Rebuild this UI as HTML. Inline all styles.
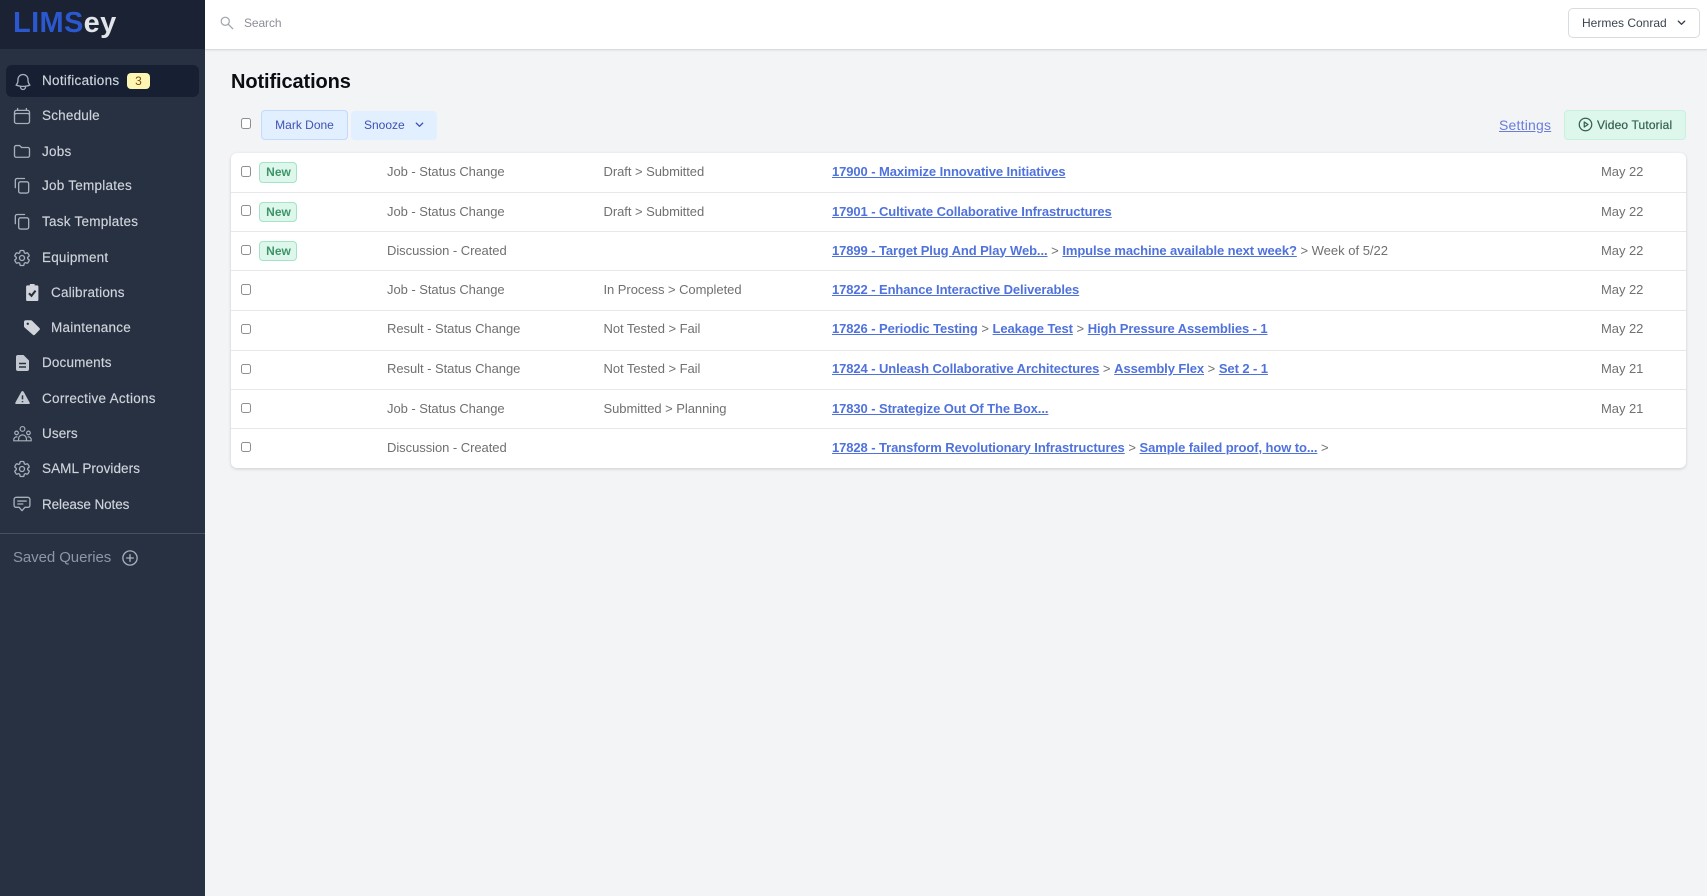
<!DOCTYPE html>
<html lang="en">
<head>
<meta charset="utf-8">
<title>Notifications</title>
<style>
html,body{margin:0;padding:0;width:1707px;height:896px;overflow:hidden;background:#f3f4f6;font-family:"Liberation Sans",Arial,sans-serif;}
*{box-sizing:border-box;}
.a{position:absolute;white-space:nowrap;}
#side{position:absolute;left:0;top:0;width:205px;height:896px;background:#283141;}
#logo{position:absolute;left:0;top:0;width:205px;height:49px;background:#1a2233;}
#active{position:absolute;left:6px;top:65px;width:193px;height:32px;background:#172033;border-radius:6px;}
.n{position:absolute;left:42px;height:20px;line-height:20px;font-size:13.5px;color:#cfd4dc;white-space:nowrap;-webkit-text-stroke:.15px #cfd4dc;letter-spacing:.25px;}
.n.s{left:51px;}
.i{position:absolute;left:12px;width:20px;height:20px;fill:none;stroke:#a7afbb;stroke-width:1.6;stroke-linecap:round;stroke-linejoin:round;}
.f{position:absolute;fill:#d1d5db;}
#top{position:absolute;left:205px;top:0;width:1502px;height:49.5px;background:#fff;border-bottom:1px solid #d9dbdf;box-shadow:0 1px 2px rgba(0,0,0,.06);}
#card{position:absolute;left:231px;top:153px;width:1455px;height:315px;background:#fff;border-radius:6px;box-shadow:0 1px 3px rgba(0,0,0,.16);}
.sep{position:absolute;left:231px;width:1455px;height:1px;background:#e5e7eb;}
.cb{position:absolute;left:240.5px;width:10.5px;height:10.5px;background:#fff;border:1px solid #8f8f8f;border-radius:2.5px;}
.badge{position:absolute;left:259px;width:38px;height:20.5px;background:#def7ec;border:1px solid #a5e3c5;border-radius:4px;color:#3f9468;font-size:12px;font-weight:bold;line-height:18.5px;text-align:center;padding-left:1px;}
.t{position:absolute;height:20px;line-height:20px;font-size:13px;color:#707070;white-space:nowrap;letter-spacing:-.05px;}
.l{position:absolute;left:832px;height:20px;line-height:20px;font-size:13px;color:#707070;white-space:nowrap;}
.l a{color:#4f72dc;font-weight:bold;text-decoration:underline;letter-spacing:-.09px;}
</style>
</head>
<body>
<div id="side">
  <div id="logo">
    <div class="a" style="left:13px;top:7px;line-height:32px;font-size:29px;font-weight:bold;letter-spacing:.35px;"><span style="color:#2b57cf">LIMS</span><span style="color:#e1e4e9">ey</span></div>
  </div>
  <div id="active"></div>

  <svg class="i" style="top:71.500px;left:12.500px" viewBox="0 0 24 24"><path d="M14.857 17.082a23.848 23.848 0 0 0 5.454-1.31A8.967 8.967 0 0 1 18 9.75V9A6 6 0 0 0 6 9v.75a8.967 8.967 0 0 1-2.312 6.022c1.733.64 3.56 1.085 5.455 1.31m5.714 0a24.255 24.255 0 0 1-5.714 0m5.714 0a3 3 0 1 1-5.714 0"/></svg>
  <div class="n" style="top:71px;letter-spacing:.3px">Notifications</div>
  <div class="a" style="left:127px;top:73px;width:23px;height:16px;background:#fdf6b2;border-radius:4px;color:#7a4a12;font-size:12px;line-height:16px;text-align:center;">3</div>

  <svg class="i" style="top:106px" viewBox="0 0 24 24"><path d="M6.75 3v2.25M17.25 3v2.25M3 18.75V7.5a2.25 2.25 0 0 1 2.25-2.25h13.5A2.25 2.25 0 0 1 21 7.5v11.25m-18 0A2.25 2.25 0 0 0 5.25 21h13.5A2.25 2.25 0 0 0 21 18.75m-18 0v-7.5A2.25 2.25 0 0 1 5.25 9h13.5A2.25 2.25 0 0 1 21 11.25v7.5"/></svg>
  <div class="n" style="top:106px;letter-spacing:.2px">Schedule</div>

  <svg class="i" style="top:141px" viewBox="0 0 24 24"><path d="M3 7.500a2 2 0 0 1 2-2h4.200l2.300 2.300H19a2 2 0 0 1 2 2v7.700a2 2 0 0 1-2 2H5a2 2 0 0 1-2-2z"/></svg>
  <div class="n" style="top:141.5px">Jobs</div>

  <svg class="i" style="top:176px" viewBox="0 0 24 24"><path d="M4 14V5.100C4 3.900 4.900 3 6.100 3H15"/><rect x="8" y="7" width="12" height="13.500" rx="2.200"/></svg>
  <div class="n" style="top:176px">Job Templates</div>

  <svg class="i" style="top:212px" viewBox="0 0 24 24"><path d="M4 14V5.100C4 3.900 4.900 3 6.100 3H15"/><rect x="8" y="7" width="12" height="13.500" rx="2.200"/></svg>
  <div class="n" style="top:212px">Task Templates</div>

  <svg class="i" style="top:248px" viewBox="0 0 24 24"><path d="M9.594 3.94c.09-.542.56-.94 1.11-.94h2.593c.55 0 1.02.398 1.11.94l.213 1.281c.063.374.313.686.645.87.074.04.147.083.22.127.325.196.72.257 1.075.124l1.217-.456a1.125 1.125 0 0 1 1.37.49l1.296 2.247a1.125 1.125 0 0 1-.26 1.431l-1.003.827c-.293.241-.438.613-.43.992a7.723 7.723 0 0 1 0 .255c-.008.378.137.75.43.991l1.004.827c.424.35.534.955.26 1.43l-1.298 2.247a1.125 1.125 0 0 1-1.369.491l-1.217-.456c-.355-.133-.75-.072-1.076.124a6.47 6.47 0 0 1-.22.128c-.331.183-.581.495-.644.869l-.213 1.281c-.09.543-.56.94-1.11.94h-2.594c-.55 0-1.019-.398-1.11-.94l-.213-1.281c-.062-.374-.312-.686-.644-.87a6.52 6.52 0 0 1-.22-.127c-.325-.196-.72-.257-1.076-.124l-1.217.456a1.125 1.125 0 0 1-1.369-.49l-1.297-2.247a1.125 1.125 0 0 1 .26-1.431l1.004-.827c.292-.24.437-.613.43-.991a6.932 6.932 0 0 1 0-.255c.007-.38-.138-.751-.43-.992l-1.004-.827a1.125 1.125 0 0 1-.26-1.43l1.297-2.247a1.125 1.125 0 0 1 1.37-.491l1.216.456c.356.133.751.072 1.076-.124.072-.044.146-.086.22-.128.332-.183.582-.495.644-.869l.214-1.28Z"/><path d="M15 12a3 3 0 1 1-6 0 3 3 0 0 1 6 0Z"/></svg>
  <div class="n" style="top:248px;letter-spacing:.2px">Equipment</div>

  <svg class="f" style="left:26px;top:284px;width:12.500px;height:17px;" viewBox="0 0 13 18"><path d="M4 0h5v1.500h2.500A1.500 1.500 0 0 1 13 3v13.500a1.500 1.500 0 0 1-1.500 1.500h-10A1.500 1.500 0 0 1 0 16.500V3a1.500 1.500 0 0 1 1.500-1.500H4z"/><path d="M3 9.800l2.700 2.700L10 7" style="fill:none;stroke:#283141;stroke-width:2.200"/></svg>
  <div class="n s" style="top:282.500px;letter-spacing:.2px">Calibrations</div>

  <svg class="f" style="left:24px;top:320px;width:16px;height:15.500px;" viewBox="0 0 17 16"><path d="M0 2a2 2 0 0 1 2-2h5.200a2 2 0 0 1 1.400.6l7.800 7.700a1.500 1.500 0 0 1 0 2.100l-4.900 5a1.500 1.500 0 0 1-2.100 0L.6 7.700A2 2 0 0 1 0 6.300z"/><circle cx="4" cy="3.800" r="1.300" fill="#283141"/></svg>
  <div class="n s" style="top:318px">Maintenance</div>

  <svg class="f" style="left:16px;top:355px;width:13px;height:16px;" viewBox="0 0 13 16"><path d="M2 0h5.500L13 5.500V14a2 2 0 0 1-2 2H2a2 2 0 0 1-2-2V2a2 2 0 0 1 2-2z" fill="#c3c8d0"/><path d="M3 8.500h7M3 12h7" style="stroke:#283141;stroke-width:1.600;fill:none"/></svg>
  <div class="n" style="top:353px;letter-spacing:.15px">Documents</div>

  <svg class="f" style="left:15px;top:390.500px;width:15px;height:13.500px;" viewBox="0 0 15 14"><path d="M6.300.8a1.400 1.400 0 0 1 2.400 0l6.100 11a1.400 1.400 0 0 1-1.200 2.100H1.400A1.400 1.400 0 0 1 .2 11.800z" fill="#c3c8d0"/><path d="M7.500 4.500v4.200M7.500 10.500v1.200" style="stroke:#283141;stroke-width:1.600;fill:none"/></svg>
  <div class="n" style="top:388.500px;letter-spacing:.28px">Corrective Actions</div>

  <svg class="i" style="top:424.500px;left:13px;width:19px;height:19px;stroke-width:1.500" viewBox="0 0 24 24"><circle cx="12" cy="5" r="3"/><circle cx="4.500" cy="10" r="2.300"/><circle cx="19.500" cy="10" r="2.300"/><path d="M7 20v-2.500a5 5 0 0 1 10 0V20M1 20v-1.500A3.500 3.500 0 0 1 4.500 15H5M23 20v-1.500a3.500 3.500 0 0 0-3.500-3.500H19M1 20h22"/></svg>
  <div class="n" style="top:423.500px;letter-spacing:.1px">Users</div>

  <svg class="i" style="top:459px" viewBox="0 0 24 24"><path d="M9.594 3.94c.09-.542.56-.94 1.11-.94h2.593c.55 0 1.02.398 1.11.94l.213 1.281c.063.374.313.686.645.87.074.04.147.083.22.127.325.196.72.257 1.075.124l1.217-.456a1.125 1.125 0 0 1 1.37.49l1.296 2.247a1.125 1.125 0 0 1-.26 1.431l-1.003.827c-.293.241-.438.613-.43.992a7.723 7.723 0 0 1 0 .255c-.008.378.137.75.43.991l1.004.827c.424.35.534.955.26 1.43l-1.298 2.247a1.125 1.125 0 0 1-1.369.491l-1.217-.456c-.355-.133-.75-.072-1.076.124a6.47 6.47 0 0 1-.22.128c-.331.183-.581.495-.644.869l-.213 1.281c-.09.543-.56.94-1.11.94h-2.594c-.55 0-1.019-.398-1.11-.94l-.213-1.281c-.062-.374-.312-.686-.644-.87a6.52 6.52 0 0 1-.22-.127c-.325-.196-.72-.257-1.076-.124l-1.217.456a1.125 1.125 0 0 1-1.369-.49l-1.297-2.247a1.125 1.125 0 0 1 .26-1.431l1.004-.827c.292-.24.437-.613.43-.991a6.932 6.932 0 0 1 0-.255c.007-.38-.138-.751-.43-.992l-1.004-.827a1.125 1.125 0 0 1-.26-1.43l1.297-2.247a1.125 1.125 0 0 1 1.37-.491l1.216.456c.356.133.751.072 1.076-.124.072-.044.146-.086.22-.128.332-.183.582-.495.644-.869l.214-1.28Z"/><path d="M15 12a3 3 0 1 1-6 0 3 3 0 0 1 6 0Z"/></svg>
  <div class="n" style="top:459px;letter-spacing:.07px">SAML Providers</div>

  <svg class="i" style="top:494px" viewBox="0 0 24 24"><path d="M5 4h14A2.500 2.500 0 0 1 21.500 6.500v7a2.500 2.500 0 0 1-2.500 2.500h-3.500L12 20l-3.500-4H5A2.500 2.500 0 0 1 2.500 13.500v-7A2.500 2.500 0 0 1 5 4z"/><path d="M7 8.500h10M7 12h6"/></svg>
  <div class="n" style="top:494.500px;letter-spacing:-.1px">Release Notes</div>

  <div class="a" style="left:0;top:533px;width:205px;height:1px;background:#47505f;"></div>
  <div class="a" style="left:13px;top:547.500px;height:20px;line-height:20px;font-size:15px;color:#8d96a4;letter-spacing:-.08px;">Saved Queries</div>
  <svg class="i" style="left:120.500px;top:549px;width:18px;height:18px;stroke:#a7afbb;stroke-width:1.800" viewBox="0 0 24 24"><circle cx="12" cy="12" r="9.500"/><path d="M12 7.500v9M7.500 12h9"/></svg>
</div>

<div id="top"></div>
<svg class="a" style="left:218.500px;top:15px;width:15px;height:15px;fill:none;stroke:#a3a8b0;stroke-width:2;stroke-linecap:round;" viewBox="0 0 24 24"><circle cx="10" cy="10" r="6.500"/><path d="M15 15l7 7"/></svg>
<div class="t" style="left:244px;top:12.500px;font-size:12px;color:#8a8f98;letter-spacing:-.1px;">Search</div>
<div class="a" style="left:1568px;top:8px;width:132px;height:30px;background:#fff;border:1px solid #d9dbdf;border-radius:5px;"></div>
<div class="t" style="left:1582px;top:12.500px;font-size:12px;color:#3d4450;letter-spacing:0;">Hermes Conrad</div>
<svg class="a" style="left:1675.500px;top:17px;width:11px;height:11px;fill:none;stroke:#333a45;stroke-width:2.800;stroke-linecap:round;stroke-linejoin:round;" viewBox="0 0 24 24"><path d="M5 9l7 7 7-7"/></svg>

<div class="a" style="left:231px;top:70px;height:24px;line-height:24px;font-size:20px;font-weight:bold;color:#0b0d12;letter-spacing:-.1px;">Notifications</div>

<div class="cb" style="top:118px"></div>
<div class="a" style="left:261px;top:110px;width:87px;height:30px;background:#e1effe;border:1px solid #c3dafe;border-radius:4px;color:#3f51b5;font-size:12px;line-height:28px;text-align:center;">Mark Done</div>
<div class="a" style="left:351px;top:110.500px;width:86px;height:29px;background:#e1effe;border-radius:4px;color:#3f51b5;font-size:12px;line-height:29px;padding-left:13px;">Snooze</div>
<svg class="a" style="left:414px;top:119px;width:11px;height:11px;fill:none;stroke:#3f51b5;stroke-width:2.800;stroke-linecap:round;stroke-linejoin:round;" viewBox="0 0 24 24"><path d="M5 9l7 7 7-7"/></svg>

<div class="a" style="left:1499px;top:114.500px;height:20px;line-height:20px;font-size:14px;color:#6a7ddb;text-decoration:underline;letter-spacing:.2px;">Settings</div>
<div class="a" style="left:1564px;top:110px;width:122px;height:30px;background:#def7ec;border:1px solid #c8f0dc;border-radius:4px;"></div>
<svg class="a" style="left:1578px;top:117px;width:15px;height:15px;fill:none;stroke:#33614e;stroke-width:2;stroke-linejoin:round;" viewBox="0 0 24 24"><circle cx="12" cy="12" r="10"/><path d="M10 8l6 4-6 4z"/></svg>
<div class="t" style="left:1597px;top:114.500px;font-size:12px;color:#33614e;-webkit-text-stroke:.2px #33614e;letter-spacing:.15px;">Video Tutorial</div>

<div id="card"></div>
<div class="sep" style="top:192px"></div>
<div class="sep" style="top:231px"></div>
<div class="sep" style="top:270px"></div>
<div class="sep" style="top:310px"></div>
<div class="sep" style="top:350px"></div>
<div class="sep" style="top:389px"></div>
<div class="sep" style="top:428px"></div>

<div class="cb" style="top:166px"></div>
<div class="badge" style="top:162px">New</div>
<div class="t" style="left:387px;top:162px">Job - Status Change</div>
<div class="t" style="left:603.500px;top:162px">Draft &gt; Submitted</div>
<div class="l" style="top:162px"><a>17900 - Maximize Innovative Initiatives</a></div>
<div class="t" style="left:1601px;top:162px">May 22</div>

<div class="cb" style="top:205px"></div>
<div class="badge" style="top:201.500px">New</div>
<div class="t" style="left:387px;top:201.500px">Job - Status Change</div>
<div class="t" style="left:603.500px;top:201.500px">Draft &gt; Submitted</div>
<div class="l" style="top:201.500px"><a>17901 - Cultivate Collaborative Infrastructures</a></div>
<div class="t" style="left:1601px;top:201.500px">May 22</div>

<div class="cb" style="top:244.500px"></div>
<div class="badge" style="top:240.500px">New</div>
<div class="t" style="left:387px;top:240.500px">Discussion - Created</div>
<div class="l" style="top:240.500px"><a>17899 - Target Plug And Play Web...</a> &gt; <a>Impulse machine available next week?</a> &gt; Week of 5/22</div>
<div class="t" style="left:1601px;top:240.500px">May 22</div>

<div class="cb" style="top:284px"></div>
<div class="t" style="left:387px;top:280px">Job - Status Change</div>
<div class="t" style="left:603.500px;top:280px">In Process &gt; Completed</div>
<div class="l" style="top:280px"><a>17822 - Enhance Interactive Deliverables</a></div>
<div class="t" style="left:1601px;top:280px">May 22</div>

<div class="cb" style="top:323.500px"></div>
<div class="t" style="left:387px;top:319px">Result - Status Change</div>
<div class="t" style="left:603.500px;top:319px">Not Tested &gt; Fail</div>
<div class="l" style="top:319px"><a>17826 - Periodic Testing</a> &gt; <a>Leakage Test</a> &gt; <a>High Pressure Assemblies - 1</a></div>
<div class="t" style="left:1601px;top:319px">May 22</div>

<div class="cb" style="top:363.500px"></div>
<div class="t" style="left:387px;top:359px">Result - Status Change</div>
<div class="t" style="left:603.500px;top:359px">Not Tested &gt; Fail</div>
<div class="l" style="top:359px"><a>17824 - Unleash Collaborative Architectures</a> &gt; <a>Assembly Flex</a> &gt; <a>Set 2 - 1</a></div>
<div class="t" style="left:1601px;top:359px">May 21</div>

<div class="cb" style="top:402.500px"></div>
<div class="t" style="left:387px;top:398.500px">Job - Status Change</div>
<div class="t" style="left:603.500px;top:398.500px">Submitted &gt; Planning</div>
<div class="l" style="top:398.500px"><a>17830 - Strategize Out Of The Box...</a></div>
<div class="t" style="left:1601px;top:398.500px">May 21</div>

<div class="cb" style="top:441.500px"></div>
<div class="t" style="left:387px;top:437.500px">Discussion - Created</div>
<div class="l" style="top:437.500px"><a>17828 - Transform Revolutionary Infrastructures</a> &gt; <a>Sample failed proof, how to...</a> &gt;</div>
</body>
</html>
